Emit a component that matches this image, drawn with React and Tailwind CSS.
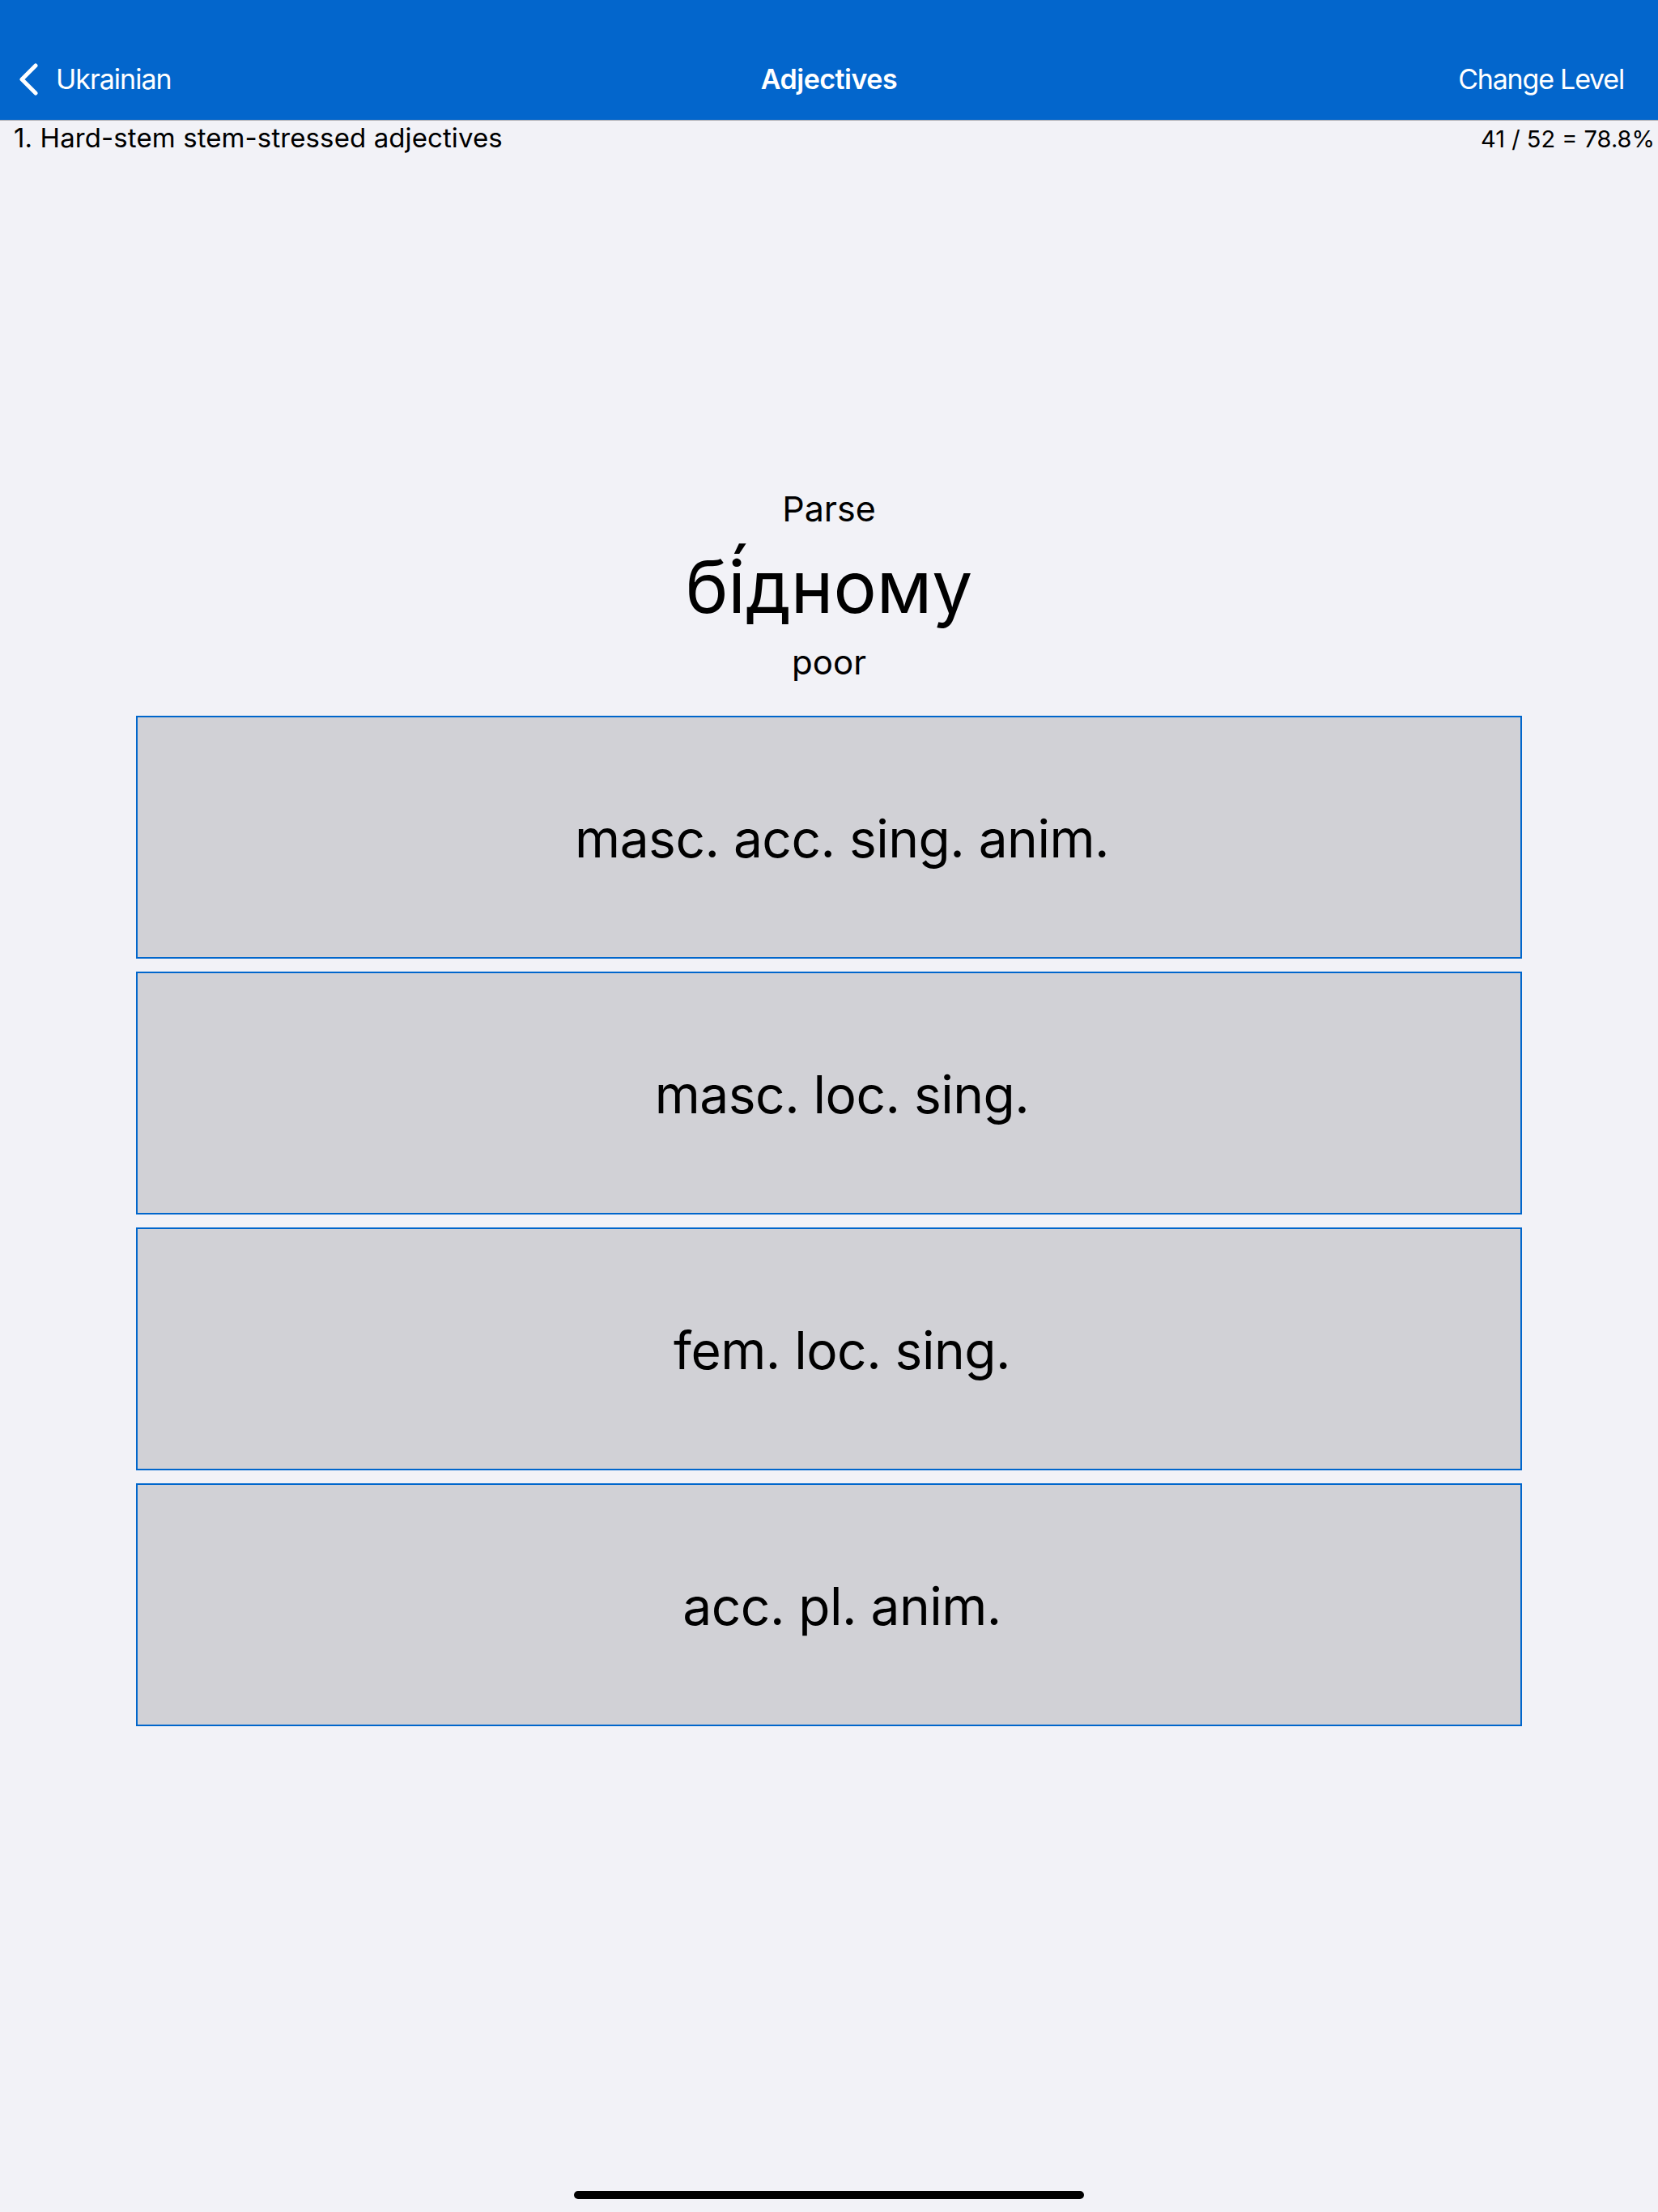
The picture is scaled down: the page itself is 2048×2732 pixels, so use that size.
import React from 'react';

const choices = [
  'masc. acc. sing. anim.',
  'masc. loc. sing.',
  'fem. loc. sing.',
  'acc. pl. anim.',
];

function BackChevron() {
  return (
    <svg width="26" height="40" viewBox="0 0 26 40" fill="none">
      <path d="M21 3 L4 20 L21 37" stroke="white" strokeWidth="5" strokeLinecap="round" strokeLinejoin="round" />
    </svg>
  );
}

export default function App() {
  return (
    <div className="h-[2732px] w-[2048px] bg-[#f2f2f7] flex flex-col font-['Inter','Noto_Sans',sans-serif] text-black">
      {/* nav bar */}
      <header className="bg-[#0366cc] h-[148px] pt-[48px] text-white">
        <div className="h-[100px] grid grid-cols-[1fr_auto_1fr] items-center">
          <div className="flex items-center pl-[23px] gap-[20px]">
            <BackChevron />
            <span className="text-[34px] leading-none tracking-[-1px]">Ukrainian</span>
          </div>
          <h1 className="text-[34px] leading-none font-semibold tracking-[-0.5px]">Adjectives</h1>
          <div className="flex justify-end pr-[42px]">
            <span className="text-[34px] leading-none tracking-[-1.2px]">Change Level</span>
          </div>
        </div>
      </header>
      <div className="h-px bg-[#a9a9ae]" />

      <div className="flex justify-between items-baseline pl-[17px] pr-[4px] pt-[1px] leading-[40px]">
        <span className="text-[33px] tracking-[0.1px]">1. Hard-stem stem-stressed adjectives</span>
        <span className="text-[29px]">41 / 52 = 78.8%</span>
      </div>

      <main className="flex-1 flex flex-col items-center pt-[415px]">
        <p className="text-[43px] leading-none">Parse</p>
        <p className="text-[89px] leading-none mt-[30px] [font-feature-settings:'ccmp'_0]">бі́дному</p>
        <p className="text-[42px] leading-none mt-[28px]">poor</p>

        <div className="w-full px-[168px] mt-[45px] flex flex-col gap-4">
          {choices.map((c) => (
            <button
              key={c}
              className="h-[300px] w-full bg-[#d1d1d6] border-2 border-[#0066cc] flex items-center justify-center pl-8 pt-[4px] text-[64px] leading-none tracking-[-0.5px]"
            >
              {c}
            </button>
          ))}
        </div>
      </main>

      <div className="flex justify-center pb-[16px]">
        <div className="w-[630px] h-[10px] rounded-full bg-black" />
      </div>
    </div>
  );
}
